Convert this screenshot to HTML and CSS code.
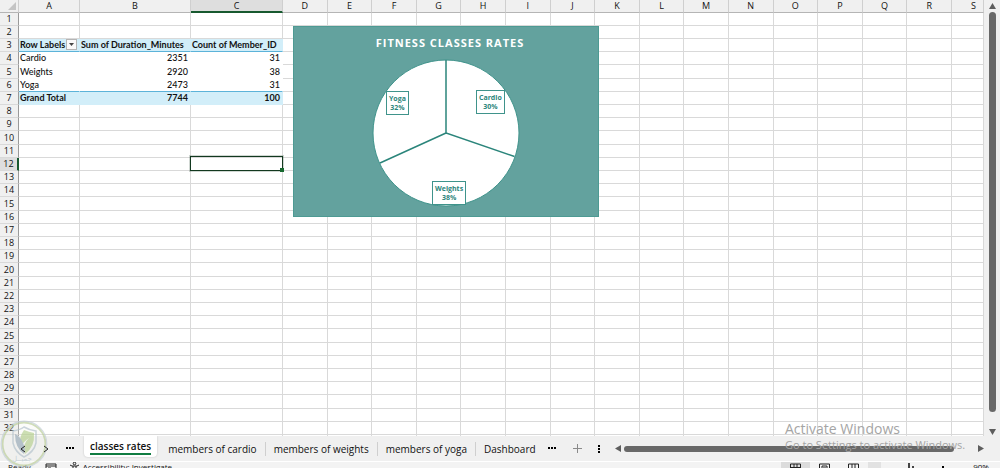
FILE: index.html
```html
<!DOCTYPE html>
<html lang="en">
<head>
    <meta charset="UTF-8">
    <meta name="viewport" content="width=device-width, initial-scale=1.0">
    <title>classes rates</title>
    <link rel="stylesheet" href="styles.css">
</head>
<body>
    <main class="workspace">
        <div class="sheet-area">
            <table class="sheet">
                <colgroup id="sheet-cols"></colgroup>
                <thead>
                    <tr id="sheet-head"></tr>
                </thead>
                <tbody id="sheet-body"></tbody>
            </table>

            <!-- Chart floating over the cells -->
            <section class="chart">
                <h1 class="chart-title">FITNESS CLASSES RATES</h1>
                <div class="pie">
                    <svg class="pie-drawing" viewBox="0 0 148 148" aria-hidden="true">
                        <circle cx="74" cy="74" r="73" fill="#fff" stroke="#3f938b" stroke-width="1"/>
                        <path d="M74 1V74L142.500 97.500M74 74L8 104" fill="none" stroke="#2b857b" stroke-width="1.500"/>
                    </svg>
                    <div class="pie-label label-cardio">Cardio<br>30%</div>
                    <div class="pie-label label-weights">Weights<br>38%</div>
                    <div class="pie-label label-yoga">Yoga<br>32%</div>
                </div>
            </section>
        </div>

        <div class="scroll-vertical">
            <button class="scroll-button" aria-label="Scroll up">
                <svg width="7" height="6" viewBox="0 0 7 6"><path d="M3.500 0L7 6H0Z"/></svg>
            </button>
            <div class="scroll-thumb-vertical"></div>
            <button class="scroll-button" aria-label="Scroll down">
                <svg width="7" height="6" viewBox="0 0 7 6"><path d="M0 0H7L3.500 6Z"/></svg>
            </button>
        </div>
    </main>

    <nav class="tab-bar">
        <div class="tab-arrows">
            <button class="icon-button" aria-label="Previous sheet">
                <svg width="6" height="8" viewBox="0 0 6 8" class="line-icon"><path d="M5 1L1 4L5 7"/></svg>
            </button>
            <button class="icon-button" aria-label="Next sheet">
                <svg width="6" height="8" viewBox="0 0 6 8" class="line-icon"><path d="M1 1L5 4L1 7"/></svg>
            </button>
            <button class="icon-button" aria-label="More sheets to the left">
                <svg width="9" height="3" viewBox="0 0 9 3"><path d="M0 0H2V2H0ZM3 0H5V2H3ZM6 0H8V2H6Z"/></svg>
            </button>
        </div>
        <a href="#" class="tab tab-active"><span>classes rates</span></a>
        <a href="#" class="tab">members of cardio</a>
        <a href="#" class="tab">members of weights</a>
        <a href="#" class="tab">members of yoga</a>
        <a href="#" class="tab">Dashboard</a>
        <div class="tab-tools">
            <button class="icon-button" aria-label="More sheets to the right">
                <svg width="9" height="3" viewBox="0 0 9 3"><path d="M0 0H2V2H0ZM3 0H5V2H3ZM6 0H8V2H6Z"/></svg>
            </button>
            <button class="icon-button" aria-label="New sheet">
                <svg width="9" height="9" viewBox="0 0 9 9"><path d="M4 0H5V9H4ZM0 4H9V5H0Z" fill="#8a8a8a"/></svg>
            </button>
            <button class="icon-button" aria-label="Resize tab bar">
                <svg width="2" height="8" viewBox="0 0 2 8"><path d="M0 0H2V2H0ZM0 3H2V5H0ZM0 6H2V8H0Z"/></svg>
            </button>
        </div>
        <div class="scroll-horizontal">
            <button class="scroll-button" aria-label="Scroll left">
                <svg width="6" height="7" viewBox="0 0 6 7"><path d="M6 0V7L0 3.500Z"/></svg>
            </button>
            <div class="scroll-thumb-horizontal"></div>
            <button class="scroll-button" aria-label="Scroll right">
                <svg width="6" height="7" viewBox="0 0 6 7"><path d="M0 0V7L6 3.500Z"/></svg>
            </button>
        </div>
    </nav>

    <footer class="status-bar">
        <span>Ready</span>
        <svg class="status-macro" width="12" height="9" viewBox="0 0 12 9"><path d="M1 9V1H11V9M1 3H11M3 5H6M8 6H11" fill="none" stroke="#222"/></svg>
        <svg class="status-access" width="11" height="9" viewBox="0 0 11 9"><path d="M1 3L3 4L8 4L10 3M4 4V8M7 4V8" fill="none" stroke="#222"/><circle cx="5.500" cy="1.500" r="1.300" fill="none" stroke="#222"/></svg>
        <span>Accessibility: Investigate</span>
        <div class="view-buttons">
            <button class="view-button view-active" aria-label="Normal view">
                <svg width="11" height="9" viewBox="0 0 11 9"><path d="M0.500 9V1H10.500V9M4 1V9M7 1V9M0 4.500H11" fill="none" stroke="#222"/></svg>
            </button>
            <button class="view-button" aria-label="Page layout view">
                <svg width="11" height="9" viewBox="0 0 11 9"><path d="M0.500 9V1H10.500V9M3 9V3H8V9M4 5H7" fill="none" stroke="#222"/></svg>
            </button>
            <button class="view-button" aria-label="Page break view">
                <svg width="11" height="9" viewBox="0 0 11 9"><path d="M0.500 9V1H10.500V9M4 1V9M7 1V7" fill="none" stroke="#222"/></svg>
            </button>
        </div>
        <div class="zoom-control">
            <button class="zoom-button zoom-out" aria-label="Zoom out"><svg width="6" height="7" viewBox="0 0 6 7"><path d="M0 4H6V5H0Z"/></svg></button>
            <svg width="6" height="7" viewBox="0 0 6 7"><path d="M0 1H2V7H0ZM4 4H6V7H4Z" fill="#444"/></svg>
            <button class="zoom-button" aria-label="Zoom in"><svg width="6" height="7" viewBox="0 0 6 7"><path d="M0 4H6V5H0ZM2 2H4V7H2Z"/></svg></button>
            <span>90%</span>
        </div>
    </footer>

    <!-- Shield stamp in the corner -->
    <div class="stamp">
        <svg width="48" height="48" viewBox="0 0 48 48" aria-hidden="true">
            <circle cx="24" cy="24" r="21.500" fill="#f3f6ec" fill-opacity="0.3" stroke="#bdcf9c" stroke-width="2"/>
            <circle cx="24" cy="24" r="22.800" fill="none" stroke="#c3ced6" stroke-width="1.200"/>
            <path d="M13 11Q20 10 24 7Q29 10 36 11V23Q34 32 24 37Q15 32 13 23Z" fill="none" stroke="#b5c3cc" stroke-width="1.500"/>
            <path d="M24 10Q29 12 34 13Q35 27 25 34Q22 24 29 18Q23 22 21 27Q18 18 24 10Z" fill="#b9d293"/>
            <path d="M15 14Q20 16 23 23Q26 29 24 34Q15 28 15 14Z" fill="#9badb9"/>
        </svg>
        <span>جميــل</span>
    </div>

    <aside class="activation">
        <p class="activation-title">Activate Windows</p>
        <p>Go to Settings to activate Windows.</p>
    </aside>

    <script src="script.js"></script>
</body>
</html>
```

FILE: styles.css
```css
* {
    margin: 0;
    padding: 0;
    box-sizing: border-box;
}

body {
    display: flex;
    flex-direction: column;
    height: 100vh;
    overflow: hidden;
    position: relative;
    background-color: #f0f0f0;
    color: #111;
    font-family: "Open Sans", "Noto Sans", sans-serif;
    font-size: 9px;
}

button {
    display: flex;
    align-items: center;
    justify-content: center;
    border: none;
    background: none;
}

svg {
    display: block;
    flex: none;
}

/* Sheet */
.workspace {
    display: flex;
    flex: 1;
    min-height: 0;
}

.sheet-area {
    position: relative;
    flex: 1;
    min-width: 0;
    overflow: hidden;
    background-color: #fff;
}

.sheet {
    width: 100%;
    table-layout: fixed;
    border-collapse: separate;
    border-spacing: 0;
}

.col-number {
    width: 19px;
}

.col-a {
    width: 61px;
}

.col-b {
    width: 111px;
}

.col-c {
    width: 92px;
}

.col-last {
    width: 32px;
}

.sheet th,
.sheet td {
    height: 13px;
    line-height: 12px;
    border-right: 1px solid #d9d9d9;
    border-bottom: 1px solid #d9d9d9;
    font-weight: normal;
    white-space: nowrap;
    overflow: hidden;
}

/* Every fifth row takes the spare pixel */
.sheet tbody tr:nth-child(5n) > * {
    height: 14px;
}

.sheet thead th {
    background-color: #f0f0f0;
    border-right-color: #cfcfcf;
    border-bottom-color: #b5b5b5;
    text-align: center;
}

.sheet thead .head-last {
    padding-left: 12px;
}

.sheet tbody th {
    background-color: #f0f0f0;
    border-right-color: #999;
    text-align: center;
}

.sheet thead .head-selected {
    background-color: #dedede;
    border-bottom: 2px solid #17592f;
    line-height: 11px;
}

.sheet tbody .row-selected {
    background-color: #dedede;
    border-right: 2px solid #17592f;
}

.corner svg {
    margin-left: 8px;
}

/* Pivot table */
.sheet .pivot {
    border-color: #fff;
    padding: 0 2px 0 1px;
    font-family: Lato, "Open Sans", sans-serif;
    font-weight: 500;
}

.sheet .pivot-number {
    text-align: right;
}

.sheet .pivot-head,
.sheet .pivot-total {
    background-color: #d2eef9;
    border-color: #d2eef9;
    font-weight: bold;
}

.sheet .pivot-head {
    border-bottom-color: #5cb3d9;
}

.sheet .pivot-line {
    border-bottom-color: #5cb3d9;
}

.filter-cell {
    display: flex;
    justify-content: space-between;
}

.filter-button {
    flex: none;
    width: 11px;
    height: 11px;
    border: 1px solid #b5b5b5;
    background-color: #fafafa;
}

.selection {
    position: absolute;
    left: 190px;
    top: 156px;
    width: 93px;
    height: 15px;
    border: 1px solid #12381f;
    outline: 1px solid rgba(18, 56, 31, 0.2);
}

.selection::after {
    content: "";
    position: absolute;
    right: -2px;
    bottom: -2px;
    width: 4px;
    height: 4px;
    background-color: #17692f;
}

/* Chart */
.chart {
    position: absolute;
    left: 293px;
    top: 26px;
    width: 306px;
    height: 191px;
    padding-top: 8px;
    border: 1px solid #4d9a93;
    background-color: #63a29e;
    text-align: center;
}

.chart-title {
    color: #fff;
    font-size: 11px;
    line-height: 15px;
    letter-spacing: 1px;
    padding-left: 8px;
}

.pie {
    position: relative;
    width: 148px;
    margin: 9px auto 0;
}

.pie-drawing {
    width: 148px;
    height: 148px;
}

.pie-label {
    position: absolute;
    padding: 2px 2px;
    border: 1px solid #3f938b;
    background-color: #fff;
    color: #2b857b;
    font-size: 7px;
    font-weight: bold;
    line-height: 9px;
}

.label-cardio {
    left: 104px;
    top: 31px;
}

.label-weights {
    left: 60px;
    top: 122px;
}

.label-yoga {
    left: 14px;
    top: 32px;
}

/* Scroll bars */
.scroll-vertical {
    display: flex;
    flex-direction: column;
    align-items: center;
    width: 16px;
    padding: 3px 0 1px;
}

.scroll-button {
    flex: none;
    fill: #5e5e5e;
}

.scroll-thumb-vertical {
    flex: 1;
    width: 7px;
    margin: 3px 0 17px;
    border-radius: 4px;
    background-color: #686868;
}

.scroll-horizontal {
    display: flex;
    align-items: center;
    flex: 1;
    height: 12px;
    padding: 0 16px 0 3px;
    margin-left: 12px;
}

.scroll-thumb-horizontal {
    flex: 1;
    height: 6px;
    margin: 0 24px 0 3px;
    border-radius: 3px;
    background-color: #686868;
}

/* Sheet tabs */
.tab-bar {
    display: flex;
    align-items: center;
    height: 25px;
    background-color: #f0f0f0;
}

.tab-arrows {
    position: relative;
    z-index: 1;
    display: flex;
    align-items: center;
    gap: 17px;
    width: 84px;
    padding-left: 20px;
}

.line-icon {
    fill: none;
    stroke: #222;
}

.tab {
    padding: 0 8px;
    border-right: 1px solid #cfcfcf;
    color: #111;
    font-size: 10px;
    line-height: 14px;
    text-decoration: none;
    white-space: nowrap;
}

.tab-active {
    align-self: flex-start;
    height: 21px;
    padding: 3px 6px;
    margin-right: 3px;
    border: none;
    border-radius: 0 0 4px 4px;
    background-color: #fff;
    box-shadow: 0 0 2px #bbb;
    font-weight: 600;
}

.tab-active span {
    display: block;
    border-bottom: 2px solid #107c41;
}

.tab:nth-last-of-type(1) {
    border-right: none;
}

.tab-tools {
    display: flex;
    align-items: center;
    gap: 16px;
    padding-left: 4px;
}

/* Status bar */
.status-bar {
    display: flex;
    align-items: flex-start;
    height: 7px;
    padding-left: 8px;
    overflow: hidden;
    border-top: 1px solid #fff;
    background-color: #f3f3f3;
    font-size: 8px;
    line-height: 10px;
    white-space: nowrap;
}

.status-macro {
    margin: 1px 12px 0 14px;
}

.status-access {
    margin-right: 3px;
}

.view-buttons {
    display: flex;
    margin-left: auto;
}

.view-button {
    width: 29px;
    padding-top: 1px;
}

.view-active {
    background-color: #dcdcdc;
}

.zoom-control {
    display: flex;
    justify-content: space-between;
    width: 132px;
    padding-right: 11px;
}

.zoom-out {
    width: 13px;
    background-color: #e2e2e2;
}

/* Stamp and activation notice */
.stamp {
    position: absolute;
    left: 0;
    bottom: 0;
    opacity: 0.7;
    pointer-events: none;
}

.stamp span {
    position: absolute;
    left: 12px;
    bottom: 5px;
    color: #b5c3cc;
    font-family: "DejaVu Sans", sans-serif;
    font-size: 7px;
    line-height: 8px;
}

.activation {
    position: absolute;
    right: 42px;
    bottom: 16px;
    width: 173px;
    color: #a5a5a5;
    font-size: 11px;
    line-height: 14px;
    white-space: nowrap;
    pointer-events: none;
}

.activation-title {
    font-size: 14px;
    line-height: 18px;
}
```

FILE: script.js
```js
const columns = "ABCDEFGHIJKLMNOPQRS".split("");
const rowCount = 33;
const selectedColumn = "C";
const selectedRow = 12;

// Pivot table values, keyed by row number
const pivot = {
    3: ["Row Labels", "Sum of Duration_Minutes", "Count of Member_ID"],
    4: ["Cardio", "2351", "31"],
    5: ["Weights", "2920", "38"],
    6: ["Yoga", "2473", "31"],
    7: ["Grand Total", "7744", "100"]
};

function addCell(row, tag, text, className) {
    const cell = document.createElement(tag);
    cell.textContent = text;
    if (className) cell.className = className;
    row.appendChild(cell);
    return cell;
}

function pivotClass(row, index) {
    let name = "pivot";
    if (row === 3) name += " pivot-head";
    if (row === 6) name += " pivot-line";
    if (row === 7) name += " pivot-total";
    if (row > 3 && index > 0) name += " pivot-number";
    return name;
}

// Column widths
["number", "a", "b", "c", ...Array(15).fill(""), "last"].forEach(function (name) {
    const col = document.createElement("col");
    if (name) col.className = "col-" + name;
    document.getElementById("sheet-cols").appendChild(col);
});

// Header
const head = document.getElementById("sheet-head");
const corner = addCell(head, "th", "", "corner");
corner.innerHTML = '<svg width="8" height="8" viewBox="0 0 8 8"><path d="M8 0V8H0Z" fill="#c4c4c4"/></svg>';
columns.forEach(function (letter) {
    let name = "";
    if (letter === selectedColumn) name = "head-selected";
    if (letter === "S") name = "head-last";
    addCell(head, "th", letter, name);
});

// Rows, the last one only peeks out above the tabs
const body = document.getElementById("sheet-body");
for (let r = 1; r <= rowCount; r++) {
    const row = document.createElement("tr");
    addCell(row, "th", r < rowCount ? r : "", r === selectedRow ? "row-selected" : "");
    columns.forEach(function (letter, i) {
        if (pivot[r] && i < 3) {
            addCell(row, "td", pivot[r][i], pivotClass(r, i));
        } else {
            addCell(row, "td", "");
        }
    });
    body.appendChild(row);
}

// Filter button beside "Row Labels"
const labelCell = body.rows[2].cells[1];
labelCell.innerHTML = '<div class="filter-cell">Row Labels<button class="filter-button" aria-label="Filter row labels">' +
    '<svg width="5" height="3" viewBox="0 0 5 3"><path d="M0 0H5L2.500 3Z" fill="#444"/></svg></button></div>';

// Selected cell frame
const selection = document.createElement("div");
selection.className = "selection";
document.querySelector(".sheet-area").appendChild(selection);
```
